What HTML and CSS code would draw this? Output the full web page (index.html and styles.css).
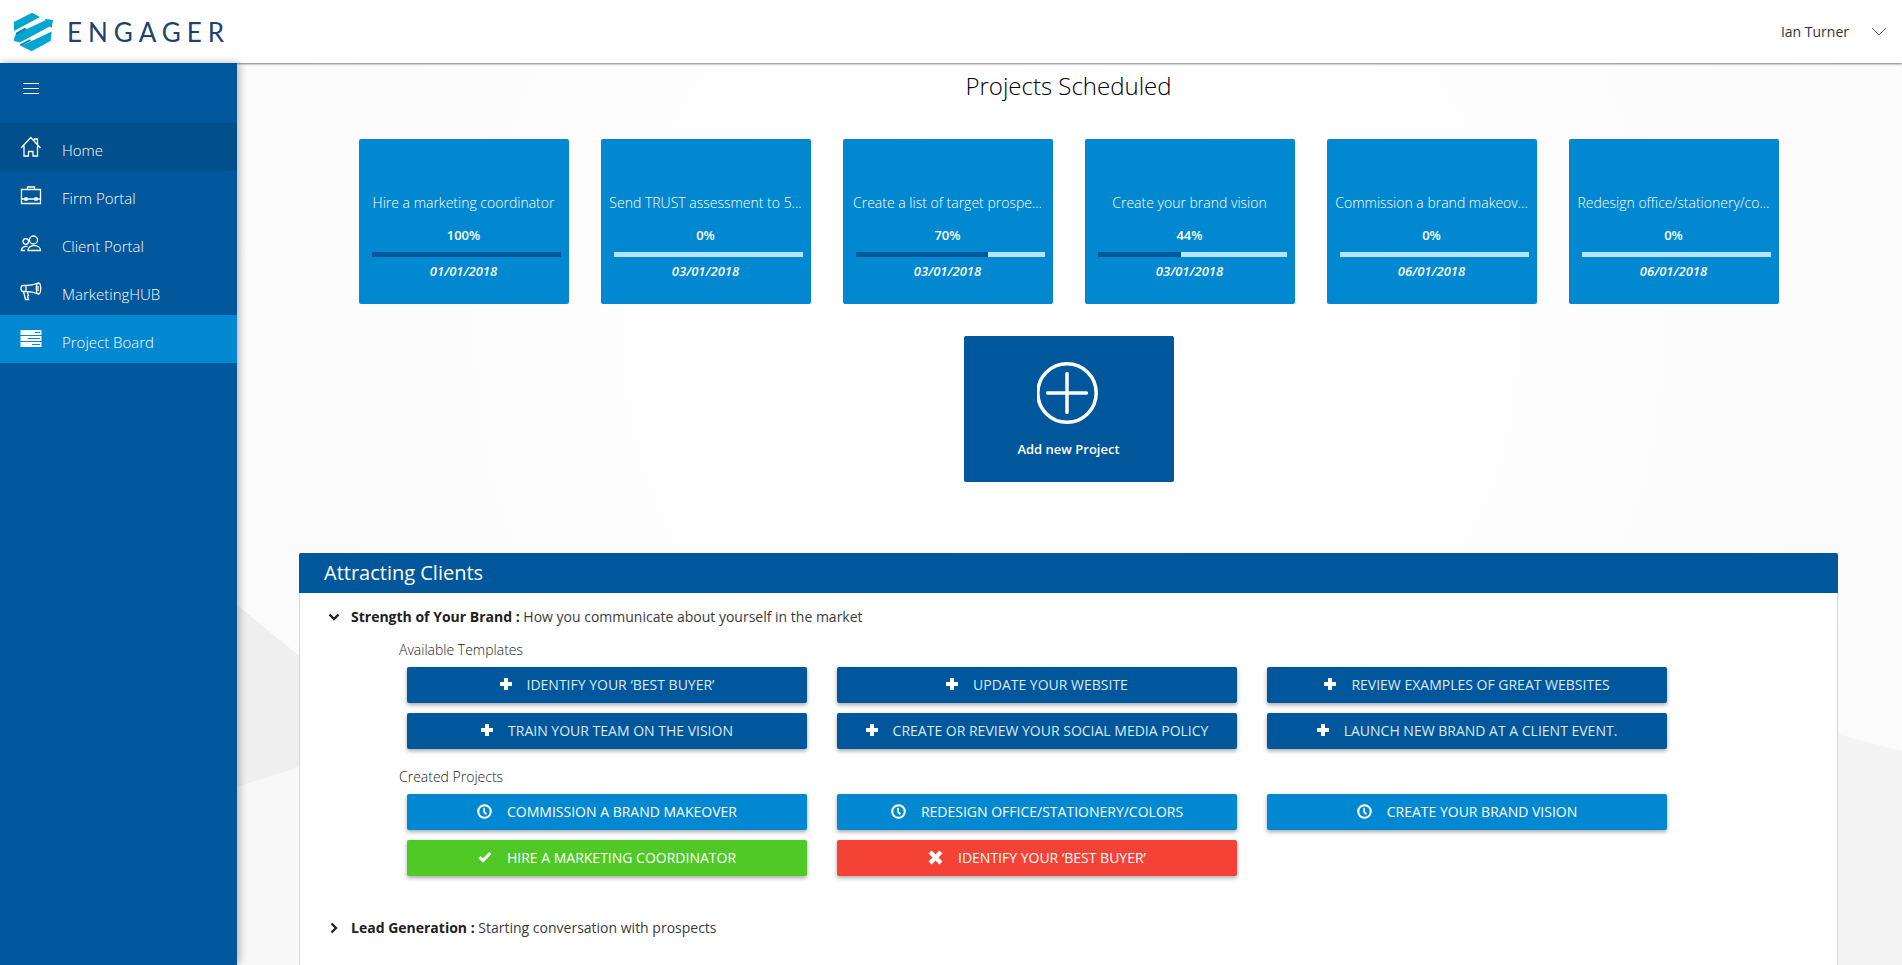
FILE: index.html
```
<!DOCTYPE html>
<html lang="en">
<head>
<meta charset="utf-8">
<meta name="viewport" content="width=device-width, initial-scale=1">
<title>Engager - Project Board</title>
<link rel="stylesheet" href="styles.css">
</head>
<body>
<svg class="defs" aria-hidden="true">
  <symbol id="i-plus" viewBox="0 0 12 12"><path d="M4 0h4v4h4v4H8v4H4V8H0V4h4z"/></symbol>
  <symbol id="i-clock" viewBox="0 0 16 16"><circle cx="8" cy="8" r="6.7" fill="none" stroke="currentColor" stroke-width="2.2"/><path d="M7.600 4v4.400l2.400 2.600" fill="none" stroke="currentColor" stroke-width="1.800"/></symbol>
  <symbol id="i-check" viewBox="0 0 14 12"><path d="M1.400 6.200l3.600 3.400 7.400-7.600" fill="none" stroke="currentColor" stroke-width="3.200"/></symbol>
  <symbol id="i-cross" viewBox="0 0 16 16"><path d="M2.200 2.200l11.600 11.600M13.800 2.200L2.200 13.800" fill="none" stroke="currentColor" stroke-width="4.600"/></symbol>
</svg>
<header class="topbar">
  <a class="brand" href="#" aria-label="Engager">
    <svg class="brand-mark" viewBox="0 0 40 40" aria-hidden="true">
      <path fill="#00a6d0" d="M0 10L18 .7l8 4.300L0 19zM0 26.500L2 22 31.500 8.200 31 7l8 1-1.300 8-2.200-1.500L6 30.500 0 29zM7 34l30.700-14.500-1 9.200-19 10.600z"/>
      <path fill="#137ea6" d="M1.500 21l9-5 2 .5-1 1.500-9 4.500zM5.500 32.500l10-5 2 .5-2 1.500-8.500 4.500z"/>
    </svg>
    <span class="brand-name">ENGAGER</span>
  </a>
  <button class="user" type="button">
    <span>Ian Turner</span>
    <svg class="user-arrow" viewBox="0 0 16 10" aria-hidden="true"><path d="M1 1l7 7 7-7"/></svg>
  </button>
</header>
<div class="shell">
  <nav class="sidebar" aria-label="Main">
    <button class="burger" type="button" aria-label="Toggle menu">
      <svg viewBox="0 0 18 14" aria-hidden="true"><path d="M1 1.500h16M1 6.500h16M1 11.500h16"/></svg>
    </button>
    <a class="nav-link is-hover" href="#">
      <svg viewBox="0 0 22 22" aria-hidden="true"><path d="M1 12L10.800 1.500l9.700 10.500M4 9.500v10.500h4.500v-4.500h4.500v4.500h4.500V9.500M14.500 5V3h3v5.500"/></svg>
      <span>Home</span></a>
    <a class="nav-link" href="#">
      <svg viewBox="0 0 22 22" aria-hidden="true"><path d="M1.500 5.500h19v14h-19zM7.500 5V3h7v2M1.500 15h3.500M7.500 15h7M17.500 15h3M5 14h2v2H5zM15 14h2v2h-2z"/></svg>
      <span>Firm Portal</span></a>
    <a class="nav-link" href="#">
      <svg viewBox="0 0 22 22" aria-hidden="true"><circle cx="13.500" cy="8" r="4"/><circle cx="5.800" cy="9.500" r="2.800"/><path d="M8 18.500c0-3 2.500-4.800 6-4.800s6.500 1.800 6.500 4.800zM7.500 14.500c-3.500-.5-6 1-6.200 4h3.700"/></svg>
      <span>Client Portal</span></a>
    <a class="nav-link" href="#">
      <svg viewBox="0 0 22 22" aria-hidden="true"><path d="M6 5.500h-3c-1.500 0-2 1.500-2 3s.5 3 2 3h3M6 5.500v6M6 5.500c4 0 8-.7 12.500-2.500M6 11.500c5 0 8 .8 12.500 2.500M3.500 11.500l2 8h3l-1-3.500 1-.5-1.200-3.500"/><ellipse cx="18.500" cy="8.500" rx="2.200" ry="5.500"/><path d="M18 6v5"/></svg>
      <span>MarketingHUB</span></a>
    <a class="nav-link is-active" href="#" aria-current="page">
      <svg viewBox="0 0 22 22" aria-hidden="true"><path class="solid" fill-rule="evenodd" d="M.5 2h21v5H.5zM15 4v1h5V4zM.5 8h21v5H.5zM8 10v1h12v-1zM.5 14h21v5H.5zM12 16v1h8v-1z"/></svg>
      <span>Project Board</span></a>
  </nav>
  <main class="content">
    <svg class="backdrop" viewBox="0 0 1665 902" preserveAspectRatio="none" aria-hidden="true">
      <path fill="#f8f8f8" d="M0 542l120 110v250H0z"/>
      <path fill="#efefef" d="M0 542l120 98v45L0 724z"/>
      <path fill="#f4f4f4" d="M1500 645l165 43v214h-165z"/>
    </svg>
    <h1 class="page-title">Projects Scheduled</h1>
    <section class="cards" aria-label="Projects scheduled">
      <article class="card"><h2 class="card-title">Hire a marketing coordinator</h2><p class="card-pct">100%</p><div class="bar"><div class="bar-fill" style="width:100%"></div></div><p class="card-date">01/01/2018</p></article>
      <article class="card"><h2 class="card-title">Send TRUST assessment to 5...</h2><p class="card-pct">0%</p><div class="bar"><div class="bar-fill" style="width:0%"></div></div><p class="card-date">03/01/2018</p></article>
      <article class="card"><h2 class="card-title">Create a list of target prospe...</h2><p class="card-pct">70%</p><div class="bar"><div class="bar-fill" style="width:70%"></div></div><p class="card-date">03/01/2018</p></article>
      <article class="card"><h2 class="card-title">Create your brand vision</h2><p class="card-pct">44%</p><div class="bar"><div class="bar-fill" style="width:44%"></div></div><p class="card-date">03/01/2018</p></article>
      <article class="card"><h2 class="card-title">Commission a brand makeov...</h2><p class="card-pct">0%</p><div class="bar"><div class="bar-fill" style="width:0%"></div></div><p class="card-date">06/01/2018</p></article>
      <article class="card"><h2 class="card-title">Redesign office/stationery/co...</h2><p class="card-pct">0%</p><div class="bar"><div class="bar-fill" style="width:0%"></div></div><p class="card-date">06/01/2018</p></article>
      <button class="add-card" type="button">
        <svg viewBox="0 0 64 62" aria-hidden="true"><circle cx="30" cy="31" r="29.200"/><path d="M30 11.500v39M10.500 31h39"/></svg>
        <span>Add new Project</span>
      </button>
    </section>
    <section class="panel">
      <h2 class="panel-head">Attracting Clients</h2>
      <div class="panel-body">
        <button class="topic" type="button" aria-expanded="true">
          <svg viewBox="0 0 12 12" aria-hidden="true"><path d="M1.500 3.500L6 8l4.500-4.500"/></svg>
          <span><b>Strength of Your Brand :</b> How you communicate about yourself in the market</span>
        </button>
        <div class="topic-body">
          <h3 class="group-title">Available Templates</h3>
          <div class="group">
            <button class="btn" type="button"><svg class="ico-s"><use href="#i-plus"/></svg><span>IDENTIFY YOUR ‘BEST BUYER’</span></button>
            <button class="btn" type="button"><svg class="ico-s"><use href="#i-plus"/></svg><span>UPDATE YOUR WEBSITE</span></button>
            <button class="btn" type="button"><svg class="ico-s"><use href="#i-plus"/></svg><span>REVIEW EXAMPLES OF GREAT WEBSITES</span></button>
            <button class="btn" type="button"><svg class="ico-s"><use href="#i-plus"/></svg><span>TRAIN YOUR TEAM ON THE VISION</span></button>
            <button class="btn" type="button"><svg class="ico-s"><use href="#i-plus"/></svg><span>CREATE OR REVIEW YOUR SOCIAL MEDIA POLICY</span></button>
            <button class="btn" type="button"><svg class="ico-s"><use href="#i-plus"/></svg><span>LAUNCH NEW BRAND AT A CLIENT EVENT.</span></button>
          </div>
          <h3 class="group-title">Created Projects</h3>
          <div class="group">
            <button class="btn btn-open" type="button"><svg class="ico-l"><use href="#i-clock"/></svg><span>COMMISSION A BRAND MAKEOVER</span></button>
            <button class="btn btn-open" type="button"><svg class="ico-l"><use href="#i-clock"/></svg><span>REDESIGN OFFICE/STATIONERY/COLORS</span></button>
            <button class="btn btn-open" type="button"><svg class="ico-l"><use href="#i-clock"/></svg><span>CREATE YOUR BRAND VISION</span></button>
            <button class="btn btn-done" type="button"><svg class="ico-m"><use href="#i-check"/></svg><span>HIRE A MARKETING COORDINATOR</span></button>
            <button class="btn btn-failed" type="button"><svg class="ico-l"><use href="#i-cross"/></svg><span>IDENTIFY YOUR ‘BEST BUYER’</span></button>
          </div>
        </div>
        <button class="topic" type="button" aria-expanded="false">
          <svg viewBox="0 0 12 12" aria-hidden="true"><path d="M3.500 1.500L8 6l-4.500 4.500"/></svg>
          <span><b>Lead Generation :</b> Starting conversation with prospects</span>
        </button>
      </div>
    </section>
  </main>
</div>
</body>
</html>
```
FILE: styles.css
```
* { box-sizing: border-box; }

html, body { height: 100%; }

body {
  margin: 0;
  display: flex;
  flex-direction: column;
  overflow: hidden;
  background: #fcfcfc;
  color: #212121;
  font-family: "Open Sans", "Noto Sans", sans-serif;
  font-size: 14px;
  line-height: 20px;
}

h1, h2, h3, p { margin: 0; font-weight: 400; }

button {
  margin: 0;
  padding: 0;
  border: 0;
  background: none;
  color: inherit;
  font: inherit;
  cursor: pointer;
}

a { color: inherit; text-decoration: none; }

.defs { position: absolute; width: 0; height: 0; }

/* Top bar */
.topbar {
  flex: none;
  display: flex;
  align-items: center;
  justify-content: space-between;
  height: 63px;
  padding: 0 15px 0 14px;
  background: #fff;
  box-shadow: 0 1px 2px rgba(0, 0, 0, .5);
  z-index: 1;
}

.brand { display: flex; align-items: center; gap: 13px; }
.brand-mark { width: 40px; height: 40px; }
.brand-name {
  color: #22416f;
  font-family: Lato, "Open Sans", sans-serif;
  font-size: 26px;
  line-height: 32px;
  letter-spacing: 6px;
}

.user { display: flex; align-items: center; gap: 22px; color: #333; }
.user-arrow { width: 16px; height: 10px; fill: none; stroke: #666; }

.shell { flex: 1; display: flex; min-height: 0; }

/* Sidebar */
.sidebar {
  flex: none;
  width: 237px;
  background: #01579b;
  color: #fff;
  font-size: 15px;
  font-weight: 300;
  box-shadow: 2px 0 8px rgba(0, 0, 0, .3);
  z-index: 2;
}

.burger { display: block; height: 60px; padding: 0 22px; }
.burger svg { display: block; width: 18px; height: 14px; margin-bottom: 8px; fill: none; stroke: #fff; }

.nav-link {
  display: flex;
  align-items: center;
  gap: 20px;
  height: 48px;
  padding: 0 20px;
}
.nav-link span { padding-top: 6px; }
.nav-link svg { width: 22px; height: 22px; fill: none; stroke: #fff; stroke-width: 1.3; }
.nav-link .solid { fill: #fff; stroke: none; }
.is-hover { background: #014f8b; }
.is-active { background: #0288d1; }

/* Page */
.content {
  position: relative;
  flex: 1;
  min-width: 0;
  overflow: hidden;
  padding: 7px 64px 0 62px;
  background: radial-gradient(circle at 50% 30%, #fff 20%, #fafafa 100%);
}
.backdrop { position: absolute; inset: 0; width: 100%; height: 100%; }
.page-title, .cards, .panel { position: relative; }

.page-title {
  color: #000;
  font-size: 24px;
  font-weight: 300;
  line-height: 32px;
  text-align: center;
}

.cards {
  display: flex;
  flex-wrap: wrap;
  justify-content: center;
  gap: 32px;
  margin-top: 37px;
}

.card {
  width: 210px;
  height: 165px;
  padding: 54px 5px 0;
  border-radius: 2px;
  background: #0288d1;
  color: #fff;
  font-size: 13px;
  text-align: center;
}
.card-title {
  font-size: 14px;
  font-weight: 300;
  white-space: nowrap;
}
.card-pct { margin-top: 12px; font-weight: 600; }
.bar { height: 5px; margin: 7px 3px 4px 8px; background: #b3e5fc; }
.bar-fill { height: 100%; background: #01579b; }
.card-date { font-style: italic; font-weight: 600; }

.add-card {
  display: flex;
  flex-direction: column;
  align-items: center;
  width: 210px;
  height: 146px;
  padding-top: 26px;
  border-radius: 2px;
  background: #01579b;
  color: #fff;
  font-size: 13px;
  font-weight: 600;
}
.add-card svg { width: 64px; height: 62px; margin-bottom: 15px; fill: none; stroke: #fff; stroke-width: 3.5; stroke-linecap: round; }

/* Panel */
.panel {
  margin-top: 71px;
  border: 1px solid #d8d8d8;
  border-top: 0;
  border-radius: 2px;
  background: #fff;
}
.panel-head {
  margin: 0 -1px;
  padding: 0 25px;
  border-radius: 2px 2px 0 0;
  background: #01579b;
  color: #fff;
  font-size: 20px;
  line-height: 40px;
}
.panel-body { padding: 14px 28px 60px; }

.topic { display: flex; align-items: center; gap: 11px; color: #3a3a3a; }
.topic svg { width: 12px; height: 12px; fill: none; stroke: #212121; stroke-width: 2.4; }
.topic b { color: #212121; font-weight: 700; }

.topic-body { padding: 13px 142px 24px 71px; }
.group-title { font-size: 14px; font-weight: 300; }
.group {
  display: grid;
  grid-template-columns: repeat(3, minmax(0, 400px));
  gap: 10px 30px;
  padding: 7px 0 18px 8px;
}

.btn {
  display: flex;
  align-items: center;
  justify-content: center;
  gap: 15px;
  height: 36px;
  border-radius: 2px;
  background: #01579b;
  box-shadow: 0 2px 4px rgba(0, 0, 0, .35);
  color: #dde9f3;
  font-size: 14px;
  white-space: nowrap;
}
.btn svg { color: #fff; fill: currentColor; margin-bottom: 2px; }
.btn-open { background: #0288d1; color: #fff; }
.btn-done { background: #4fc926; color: #fff; }
.btn-failed { background: #f44336; color: #fff; }
.ico-s { width: 12px; height: 12px; }
.ico-m { width: 14px; height: 12px; }
.ico-l { width: 15px; height: 15px; }
```
